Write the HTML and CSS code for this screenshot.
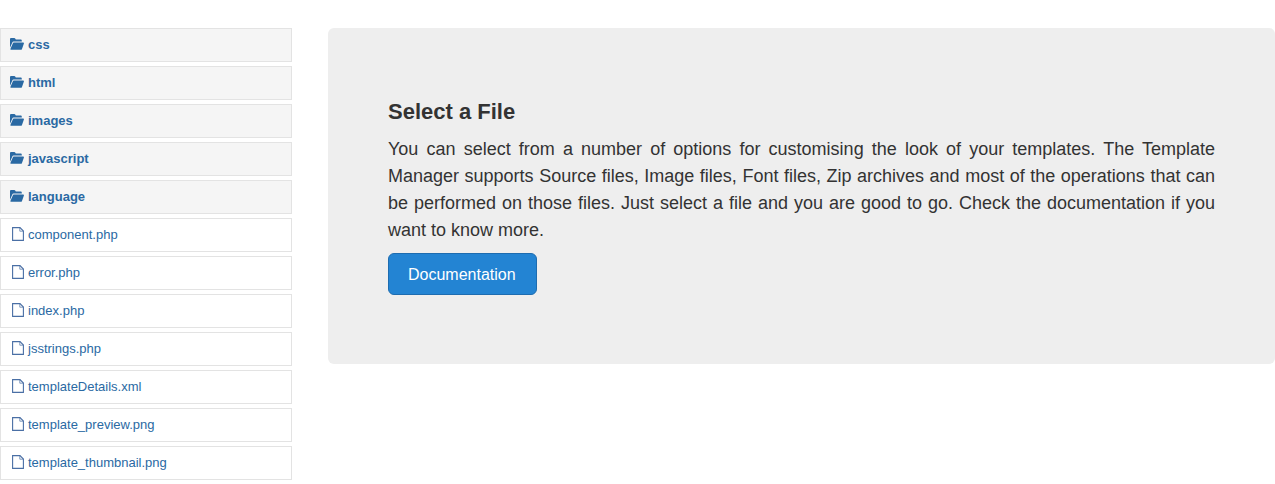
FILE: index.html
```html
<!DOCTYPE html>
<html lang="en">
  <head>
    <meta charset="UTF-8" />
    <meta name="viewport" content="width=device-width, initial-scale=1.0" />
    <title>Template Manager</title>
    <link rel="stylesheet" href="styles.css">
  </head>
  <body>
    <svg class="icon-defs" width="0" height="0">
      <symbol id="icon-folder" viewBox="0 0 14 12">
        <path d="M0 1.2C0 0.5 0.5 0 1.2 0H4.2C4.8 0 5.1 0.4 5.4 0.8L5.8 1.5H10.6C11.3 1.5 11.8 2 11.8 2.7V3.6H3.6C3 3.6 2.5 3.9 2.3 4.4L0 9.8Z" fill="#2a69a3"/>
        <path d="M3.7 4.5H13.2C13.8 4.5 14.1 5 13.9 5.5L12 10.9C11.8 11.5 11.4 11.8 10.8 11.8H0.9C0.4 11.8 0.2 11.4 0.4 11L3 5C3.2 4.7 3.4 4.5 3.7 4.5Z" fill="#2a69a3"/>
      </symbol>
      <symbol id="icon-file" viewBox="0 0 12 14">
        <path d="M0.6 0.6H8L11.4 4V13.4H0.6Z" fill="none" stroke="#4a6fa5" stroke-width="1.1"/>
        <path d="M7.8 0.8V4.2H11.2" fill="none" stroke="#4a6fa5" stroke-width="0.7"/>
      </symbol>
    </svg>
    <div class="page">
      <ul class="tree">
        <li class="tree-item folder"><a href="#"><svg class="icon"><use href="#icon-folder"/></svg>css</a></li>
        <li class="tree-item folder"><a href="#"><svg class="icon"><use href="#icon-folder"/></svg>html</a></li>
        <li class="tree-item folder"><a href="#"><svg class="icon"><use href="#icon-folder"/></svg>images</a></li>
        <li class="tree-item folder"><a href="#"><svg class="icon"><use href="#icon-folder"/></svg>javascript</a></li>
        <li class="tree-item folder"><a href="#"><svg class="icon"><use href="#icon-folder"/></svg>language</a></li>
        <li class="tree-item"><a href="#"><svg class="icon icon-page"><use href="#icon-file"/></svg>component.php</a></li>
        <li class="tree-item"><a href="#"><svg class="icon icon-page"><use href="#icon-file"/></svg>error.php</a></li>
        <li class="tree-item"><a href="#"><svg class="icon icon-page"><use href="#icon-file"/></svg>index.php</a></li>
        <li class="tree-item"><a href="#"><svg class="icon icon-page"><use href="#icon-file"/></svg>jsstrings.php</a></li>
        <li class="tree-item"><a href="#"><svg class="icon icon-page"><use href="#icon-file"/></svg>templateDetails.xml</a></li>
        <li class="tree-item"><a href="#"><svg class="icon icon-page"><use href="#icon-file"/></svg>template_preview.png</a></li>
        <li class="tree-item"><a href="#"><svg class="icon icon-page"><use href="#icon-file"/></svg>template_thumbnail.png</a></li>
      </ul>
      <div class="hero">
        <h2>Select a File</h2>
        <p>You can select from a number of options for customising the look of your templates. The Template Manager supports Source files, Image files, Font files, Zip archives and most of the operations that can be performed on those files. Just select a file and you are good to go. Check the documentation if you want to know more.</p>
        <a class="btn" href="#">Documentation</a>
      </div>
    </div>
  </body>
</html>
```

FILE: styles.css
```css
* {
  box-sizing: border-box;
}
body {
  margin: 0;
  background: #fff;
  font-family: "Liberation Sans", Arial, sans-serif;
  color: #333;
}
.icon-defs {
  display: block;
  height: 0;
}
.page {
  display: flex;
  align-items: flex-start;
  gap: 36px;
  padding-top: 28px;
}
.tree {
  display: flex;
  flex-direction: column;
  gap: 4px;
  width: 292px;
  margin: 0;
  padding: 0;
  list-style: none;
}
.tree-item {
  height: 34px;
  border: 1px solid #e3e3e3;
}
.tree-item a {
  display: flex;
  align-items: center;
  height: 100%;
  padding: 0 0 2px 9px;
  font-size: 13px;
  color: #2a69a3;
  text-decoration: none;
}
.tree-item.folder {
  background: #f5f5f5;
}
.tree-item.folder a {
  font-weight: bold;
}
.icon {
  flex: none;
  width: 14px;
  height: 12px;
  margin-right: 4px;
}
.icon-page {
  width: 12px;
  height: 14px;
  margin-left: 2px;
}
.hero {
  flex: 1;
  height: 336px;
  padding: 60px;
  border-radius: 6px;
  background: #eee;
}
.hero h2 {
  margin: 10px 0;
  font-size: 22px;
  line-height: 28px;
}
.hero p {
  margin: 0 0 9px;
  font-size: 18px;
  line-height: 27px;
  text-align: justify;
}
.btn {
  display: inline-block;
  width: 149px;
  height: 42px;
  padding: 1px 0 0 19px;
  border: 1px solid #1d6cb0;
  border-radius: 6px;
  background: #2384d3;
  color: #fff;
  font-size: 16px;
  line-height: 40px;
  text-decoration: none;
}
```
